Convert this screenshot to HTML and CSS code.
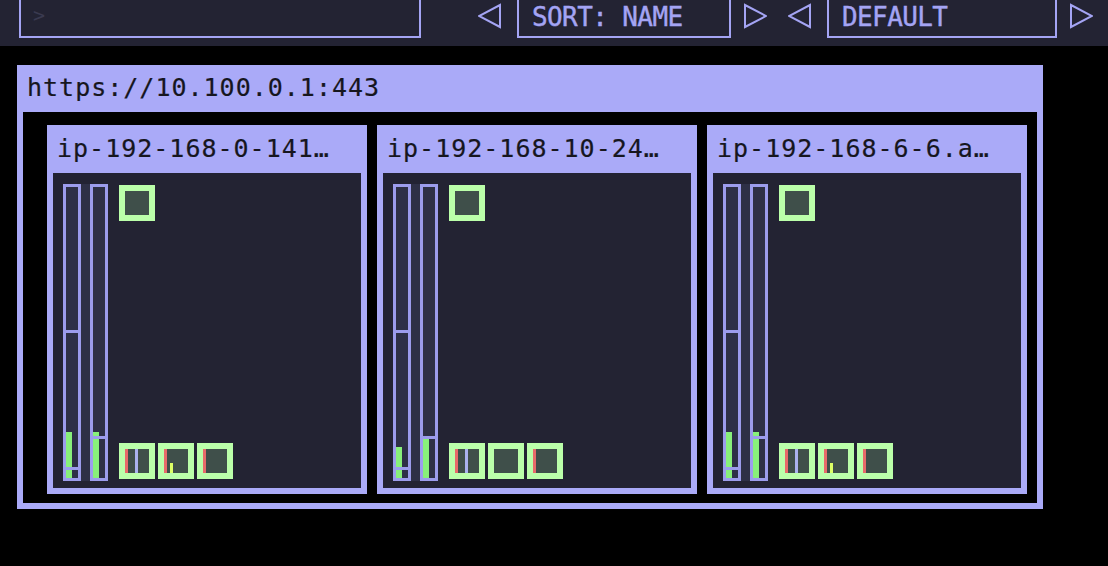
FILE: index.html
```html
<!DOCTYPE html>
<html>
<head>
<meta charset="utf-8">
<link rel="stylesheet" href="styles.css">
</head>
<body>
<div class="topbar">
  <div class="prompt-box"><span class="prompt">&gt;</span></div>
  <svg class="arrow a1" viewBox="0 0 24 26"><polygon points="22,2 22,24 1,13" /></svg>
  <div class="select sort">SORT: NAME</div>
  <svg class="arrow a2" viewBox="0 0 24 26"><polygon points="2,2 2,24 23,13" /></svg>
  <svg class="arrow a3" viewBox="0 0 24 26"><polygon points="22,2 22,24 1,13" /></svg>
  <div class="select def">DEFAULT</div>
  <svg class="arrow a2" viewBox="0 0 24 26"><polygon points="2,2 2,24 23,13" /></svg>
</div>

<div class="panel">
  <div class="panel-title">https://10.100.0.1:443</div>
  <div class="panel-body">
    <div class="card">
      <div class="card-title">ip-192-168-0-141…</div>
      <div class="card-body">
        <div class="bars">
          <div class="bar">
            <div class="fill" style="bottom:0;height:46px"></div>
            <div class="mark" style="bottom:145px"></div>
            <div class="mark" style="bottom:8px"></div>
          </div>
          <div class="bar">
            <div class="fill" style="bottom:0;height:46px"></div>
            <div class="mark" style="bottom:39px"></div>
          </div>
        </div>
        <div class="pods">
          <div class="sq"><div class="sq-in"></div></div>
          <div class="sq-row">
            <div class="sq"><div class="sq-in"><i class="red"></i><i class="lav" style="left:10px"></i></div></div>
            <div class="sq"><div class="sq-in"><i class="red"></i><i class="yel" style="left:6px;height:10px"></i></div></div>
            <div class="sq"><div class="sq-in"><i class="red"></i></div></div>
          </div>
        </div>
      </div>
    </div>

    <div class="card">
      <div class="card-title">ip-192-168-10-24…</div>
      <div class="card-body">
        <div class="bars">
          <div class="bar">
            <div class="fill" style="bottom:0;height:31px"></div>
            <div class="mark" style="bottom:145px"></div>
            <div class="mark" style="bottom:8px"></div>
          </div>
          <div class="bar">
            <div class="fill" style="bottom:0;height:39px"></div>
            <div class="mark" style="bottom:39px"></div>
          </div>
        </div>
        <div class="pods">
          <div class="sq"><div class="sq-in"></div></div>
          <div class="sq-row">
            <div class="sq"><div class="sq-in"><i class="red"></i><i class="lav" style="left:10px"></i></div></div>
            <div class="sq"><div class="sq-in"></div></div>
            <div class="sq"><div class="sq-in"><i class="red"></i></div></div>
          </div>
        </div>
      </div>
    </div>

    <div class="card">
      <div class="card-title">ip-192-168-6-6.a…</div>
      <div class="card-body">
        <div class="bars">
          <div class="bar">
            <div class="fill" style="bottom:0;height:46px"></div>
            <div class="mark" style="bottom:145px"></div>
            <div class="mark" style="bottom:8px"></div>
          </div>
          <div class="bar">
            <div class="fill" style="bottom:0;height:46px"></div>
            <div class="mark" style="bottom:39px"></div>
          </div>
        </div>
        <div class="pods">
          <div class="sq"><div class="sq-in"></div></div>
          <div class="sq-row">
            <div class="sq"><div class="sq-in"><i class="red"></i><i class="lav" style="left:10px"></i></div></div>
            <div class="sq"><div class="sq-in"><i class="red"></i><i class="yel" style="left:6px;height:10px"></i></div></div>
            <div class="sq"><div class="sq-in"><i class="red"></i></div></div>
          </div>
        </div>
      </div>
    </div>
  </div>
</div>
</body>
</html>
```

FILE: styles.css
```css
html, body {
  margin: 0;
  padding: 0;
  background: #000;
  font-family: "DejaVu Sans Mono", "Liberation Mono", monospace;
}

.topbar {
  display: flex;
  align-items: flex-start;
  height: 46px;
  background: #232333;
}

.prompt-box {
  box-sizing: border-box;
  margin-left: 19px;
  width: 402px;
  height: 38px;
  border: 2px solid #a4a4f4;
  border-top: none;
  padding-left: 12px;
  line-height: 30px;
}

.prompt {
  color: #3a3a50;
  font-size: 20px;
}

.arrow {
  width: 24px;
  height: 26px;
  margin-top: 3px;
  fill: none;
  stroke: #a4a4f4;
  stroke-width: 2;
}

.a1 { margin-left: 57px; }
.a2 { margin-left: 12px; }
.a3 { margin-left: 21px; }

.select {
  box-sizing: border-box;
  height: 38px;
  border: 2px solid #a4a4f4;
  border-top: none;
  margin-left: 15px;
  padding-left: 13px;
  color: #a4a4f4;
  font-size: 26px;
  letter-spacing: -0.6px;
  line-height: 34px;
  -webkit-text-stroke: 0.4px #a4a4f4;
}

.sort { width: 214px; }
.def { width: 230px; }

.panel {
  box-sizing: border-box;
  width: 1026px;
  margin: 19px 0 0 17px;
  border: 6px solid #aaaaf8;
  background: #aaaaf8;
}

.panel-title {
  height: 33px;
  padding: 0 0 8px 4px;
  font-size: 25px;
  letter-spacing: 1px;
  line-height: 34px;
  color: #16161e;
  -webkit-text-stroke: 0.2px #16161e;
}

.panel-body {
  display: flex;
  gap: 10px;
  background: #000;
  padding: 13px 10px 9px 24px;
}

.card {
  box-sizing: border-box;
  width: 320px;
  border: 6px solid #aaaaf8;
  background: #aaaaf8;
}

.card-title {
  height: 36px;
  padding: 0 0 6px 4px;
  font-size: 25px;
  letter-spacing: 1px;
  line-height: 36px;
  color: #16161e;
  white-space: nowrap;
  overflow: hidden;
  -webkit-text-stroke: 0.2px #16161e;
}

.card-body {
  display: flex;
  height: 315px;
  box-sizing: border-box;
  padding: 11px 0 0 10px;
  background: #232333;
}

.bars {
  display: flex;
  gap: 9px;
  height: 297px;
  background: #2e3046;
  align-self: flex-start;
}

.bar {
  position: relative;
  box-sizing: border-box;
  width: 18px;
  height: 297px;
  border: 3px solid #9c9cec;
  background: #2e3046;
}

.fill {
  position: absolute;
  left: 0;
  width: 6px;
  background: #88f07a;
}

.mark {
  position: absolute;
  left: 0;
  right: 0;
  height: 3px;
  background: #9c9cec;
}

.pods {
  display: flex;
  flex-direction: column;
  justify-content: space-between;
  margin-left: 11px;
  padding-top: 1px;
  height: 294px;
}

.sq-row {
  display: flex;
  gap: 3px;
}

.sq {
  box-sizing: border-box;
  width: 36px;
  height: 36px;
  border: 6px solid #bbffaa;
  background: #3f4f4a;
}

.sq-in {
  position: relative;
  width: 24px;
  height: 24px;
}

.sq-in i {
  position: absolute;
  bottom: 0;
  width: 3px;
}

.red {
  left: 0;
  height: 24px;
  background: #e86a6a;
}

.lav {
  height: 24px;
  background: #aab2ee;
}

.yel {
  background: #ddff66;
}
```
